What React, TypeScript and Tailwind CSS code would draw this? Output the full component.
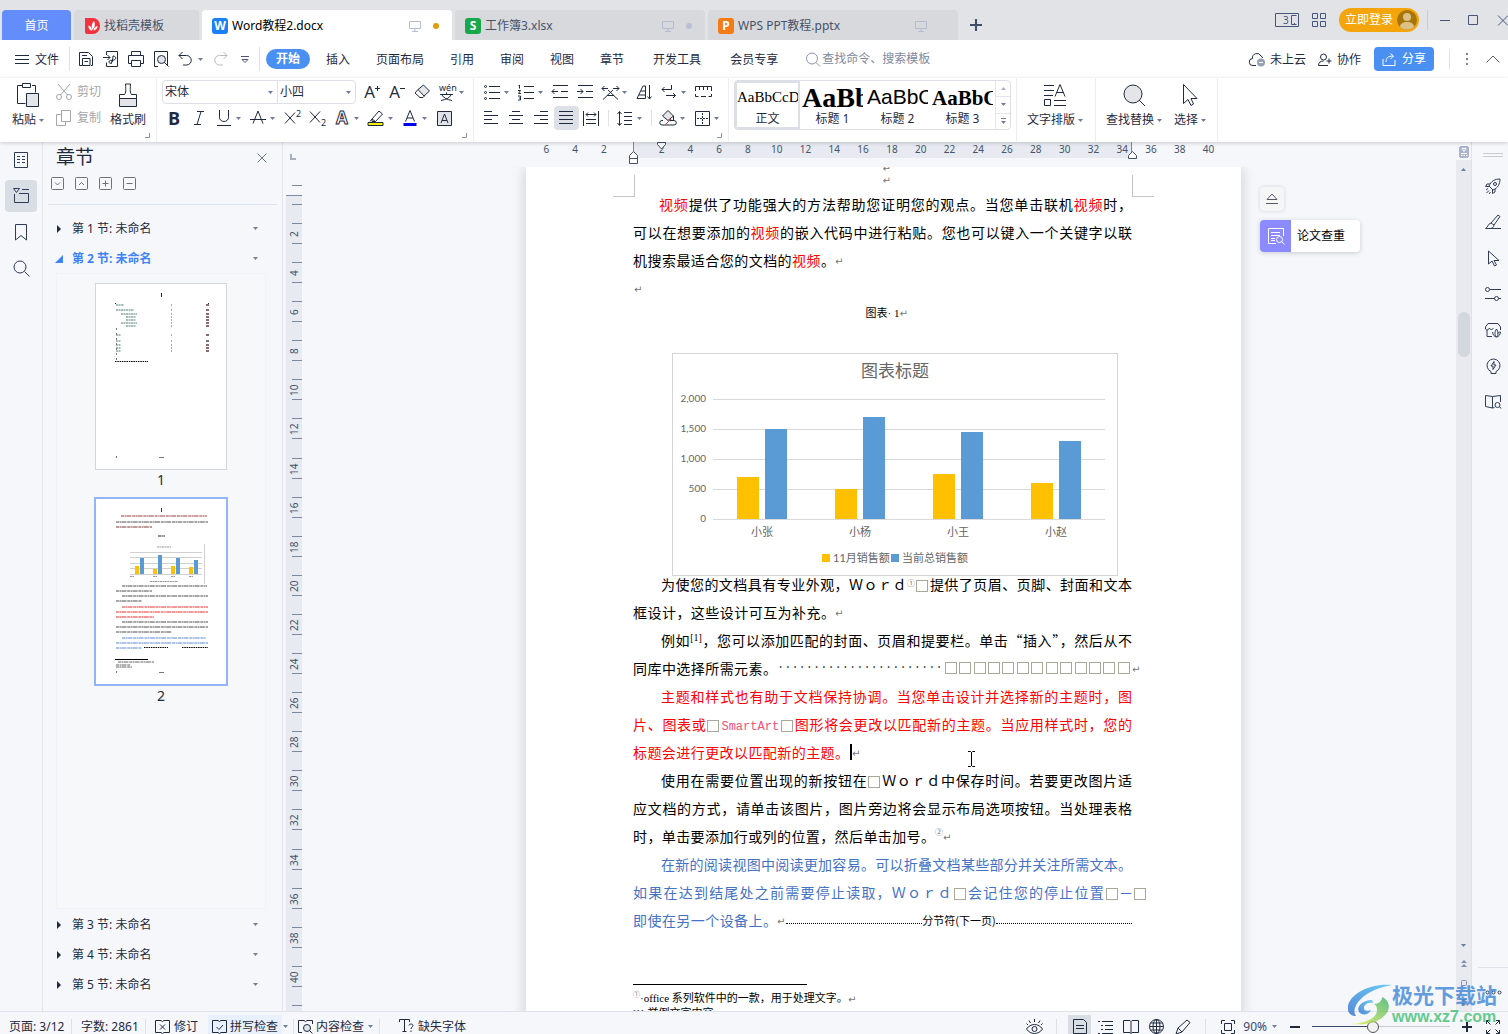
import { ReactNode } from "react";
import clsx from "clsx";

interface SvgProps {
  w?: number;
  h?: number;
  className?: string;
  children: ReactNode;
}

const Svg = ({ w = 18, h = 18, className, children }: SvgProps) => (
  <svg
    width={w}
    height={h}
    viewBox={`0 0 ${w} ${h}`}
    fill="none"
    stroke="currentColor"
    strokeWidth="1"
    className={clsx("shrink-0 overflow-visible", className)}
    aria-hidden="true"
  >
    {children}
  </svg>
);

const Caret = ({ className }: { className?: string }) => (
  <svg width="5" height="3" viewBox="0 0 5 3" className={clsx("shrink-0 fill-[#6f7d98]", className)} aria-hidden="true">
    <path d="M0 0h5L2.5 3z" />
  </svg>
);

const Screen = () => (
  <Svg w={12} h={12} className="text-[#b4bcd2]">
    <path d="M.5 1.5h11v7H.5zM6 8.5v3M3 11.5h6" />
  </Svg>
);

/* ---------- tab strip ---------- */

interface FileTabProps {
  name: string;
  letter: string;
  logo: string;
  active?: boolean;
  dot?: string;
}

const FileTab = ({ name, letter, logo, active, dot }: FileTabProps) => (
  <button
    className={clsx(
      "flex h-[30px] w-[250px] items-center rounded-t pl-[10px] pt-px text-left",
      active ? "bg-white text-black" : "bg-[#d8d9dc] text-[#46526b]",
    )}
  >
    <span className={clsx("flex size-4 items-center justify-center rounded-[3px] text-xs font-bold text-white", logo)}>
      {letter}
    </span>
    <span className="ml-1 flex-1">{name}</span>
    <Screen />
    <span className={clsx("ml-3 mr-[13px] size-[6px] rounded-full", dot)} />
  </button>
);

const TabStrip = () => (
  <header className="flex h-10 shrink-0 items-end bg-[#e2e3e7]">
    <div className="flex gap-[3px] pl-[2px]">
      <button className="h-[30px] w-[69px] rounded-t bg-[#638dfa] pt-px text-white">首页</button>
      <button className="flex h-[30px] w-[125px] items-center rounded-t bg-[#d8d9dc] pl-[11px] pt-px text-[#46526b]">
        <Svg w={15} h={16} className="mr-1">
          <path d="M0 0h8a7 8 0 0 1 0 16H2a2 2 0 0 1-2-2z" fill="#f5333f" stroke="none" />
          <path d="M7 13C4.500 12 3 10 3.500 7.500 5.500 8 7 9.500 7 13zM7.500 12C6 8 7 5 9 3c1.500 3 1 6-1.500 9zM8.500 12.500c.5-2.500 1.500-4 4-4.500 0 2.500-1.500 4-4 4.500z" fill="#fff" stroke="none" />
        </Svg>
        找稻壳模板
      </button>
      <FileTab name="Word教程2.docx" letter="W" logo="bg-[#1b7ff5]" active dot="bg-[#e39a0b]" />
      <FileTab name="工作簿3.xlsx" letter="S" logo="bg-[#17a84b]" dot="bg-[#b9c0d6]" />
      <FileTab name="WPS PPT教程.pptx" letter="P" logo="bg-[#f57c14]" />
    </div>
    <button aria-label="新建标签" className="mb-2 ml-3 text-[#3f4d69]">
      <Svg w={12} h={14}>
        <path d="M6 1v12M0 7h12" strokeWidth="2" />
      </Svg>
    </button>
    <div className="ml-auto flex h-10 items-center overflow-hidden text-[#46567a]">
      <Svg w={24} h={14}>
        <path d="M.5.5h23v13H.5zM21.500 2.500h-5v9h5M19 10.500h1" />
        <text x="8" y="11" fontSize="10" fill="currentColor" stroke="none">3</text>
      </Svg>
      <Svg w={14} h={14} className="ml-[13px]">
        <path d="M.5.5h5v5h-5zM8.500.5h5v5h-5zM.5 8.500h5v5h-5zM8.500 8.500h5v5h-5z" />
      </Svg>
      <button className="ml-[13px] flex h-6 w-20 items-center justify-between rounded-full bg-[#f5a50c] pl-[6px] pr-[2px] text-white">
        立即登录
        <Svg w={20} h={20}>
          <circle cx="10" cy="10" r="10" fill="#a87508" stroke="none" />
          <circle cx="10" cy="7" r="4" fill="#dcc187" stroke="none" />
          <path d="M3 17c0-3.500 3-5 7-5s7 1.500 7 5a10 10 0 0 1-14 0z" fill="#dcc187" stroke="none" />
        </Svg>
      </button>
      <span className="ml-2 h-5 w-px bg-[#cbccd1]" />
      <button aria-label="最小化" className="ml-3">
        <Svg w={10} h={10}><path d="M0 5.500h10" /></Svg>
      </button>
      <button aria-label="最大化" className="ml-[18px]">
        <Svg w={10} h={10}><path d="M.5.5h9v9h-9z" /></Svg>
      </button>
      <button aria-label="关闭" className="-mr-px ml-[19px]">
        <Svg w={12} h={11}><path d="M1 .5l10 10M11 .5l-10 10" /></Svg>
      </button>
    </div>
  </header>
);

/* ---------- menu row ---------- */

const Divider = ({ className }: { className?: string }) => (
  <span className={clsx("w-px shrink-0 bg-[#dfe1e6]", className)} />
);

const MenuRow = () => (
  <nav className="flex h-[38px] shrink-0 items-center bg-white pl-[15px] text-[#1f2a3f]">
    <button className="flex items-center gap-[6px] pt-px">
      <Svg w={14} h={12}><path d="M0 1.500h14M0 5.500h14M0 9.500h14" /></Svg>
      文件
    </button>
    <Divider className="ml-[10px] h-6" />
    <div className="flex w-[189px] items-center pl-2">
      <button aria-label="保存" className="w-[25px]">
        <Svg w={16} h={16}>
          <path d="M4.500 14.500h-3v-13h9l4 4v9h-1.500M4.500 14.500v-7h7.500v7zM4 4.500h5M6.500 10.500h3.500" />
        </Svg>
      </button>
      <button aria-label="输出为PDF" className="w-[25px]">
        <Svg w={16} h={16}>
          <path d="M3.500 4V.5h11v15h-11v-4M0 6.500h7M4.500 4L7 6.500 4.500 9M8 13c1-3 2-5 2-8 3 0 4 3 1 4-3 .5-5 0-5 2s3 2 4-2" />
        </Svg>
      </button>
      <button aria-label="打印" className="w-[25px]">
        <Svg w={16} h={16}>
          <path d="M3.500 4.500v-4h9v4M3.500 12.500h-3v-8h15v8h-3M3.500 9.500h9v6h-9z" />
        </Svg>
      </button>
      <button aria-label="打印预览" className="w-[25px]">
        <Svg w={16} h={16}>
          <path d="M5 15.500H1.500V.5h13V15" />
          <circle cx="8.500" cy="8.500" r="4" fill="#dfe3ea" />
          <path d="M11.500 11.500l4 4" />
        </Svg>
      </button>
      <button aria-label="撤销" className="flex w-9 items-center gap-[6px]">
        <Svg w={14} h={16}>
          <path d="M4.500 1L1 4.500 4.500 8M1 4.500h7.500a4.500 4.500 0 0 1 0 9.500H5" />
        </Svg>
        <Caret />
      </button>
      <button aria-label="恢复" className="w-[27px] text-[#b5bac4]">
        <Svg w={14} h={16}>
          <path d="M9.500 1L13 4.500 9.500 8M13 4.500H5.500a4.500 4.500 0 0 0 0 9.500H9" />
        </Svg>
      </button>
      <button aria-label="自定义快速访问" className="text-[#4a5570]">
        <Svg w={8} h={8}><path d="M0 1.500h8M1 4.500l3 3 3-3z" /></Svg>
      </button>
    </div>
    <Divider className="h-6" />
    <div className="flex items-center">
      <button className="ml-[6px] mr-[3px] h-5 w-11 rounded-full bg-[#4a90f2] font-bold text-white">开始</button>
      {["插入", "页面布局", "引用", "审阅", "视图", "章节"].map((m) => (
        <button key={m} className="px-[13px] pt-px">{m}</button>
      ))}
      <button className="pl-4 pt-px">开发工具</button>
      <button className="pl-[29px] pt-px">会员专享</button>
    </div>
    <label className="ml-7 flex items-center gap-[2px]">
      <Svg w={14} h={15} className="text-[#8a94aa]">
        <circle cx="6" cy="6.500" r="5.500" />
        <path d="M10 10.500l4 4" />
      </Svg>
      <input
        aria-label="查找命令"
        placeholder="查找命令、搜索模板"
        className="w-[120px] outline-none placeholder:text-[#8089a0]"
      />
    </label>
    <div className="ml-auto flex items-center pr-2">
      <button className="flex items-center gap-1 pt-px">
        <Svg w={17} h={14}>
          <path d="M7 12.500H4a3.500 3.500 0 0 1-.5-7 4.500 4.500 0 0 1 8.500-2.500c1 .5 1.500 1 1.500 2" />
          <circle cx="12" cy="9.500" r="4" fill="#98a0b3" stroke="none" />
          <path d="M10 9.500h4" stroke="#fff" />
        </Svg>
        未上云
      </button>
      <button className="ml-3 flex items-center gap-[5px] pt-px">
        <Svg w={14} h={14}>
          <circle cx="5.500" cy="4" r="3" />
          <path d="M10 12.500H.5c0-3 2-4.500 5-4.500M11 5.500v5M8.500 8h5" />
        </Svg>
        协作
      </button>
      <button className="ml-[13px] flex h-6 w-[60px] items-center justify-center gap-[6px] rounded bg-[#4a90f2] text-white">
        <Svg w={14} h={13}>
          <path d="M1 6v6.500h12V7M4 9c0-4 2-6 7-6M8.500.5L11.500 3 8.500 6" />
        </Svg>
        分享
      </button>
      <Divider className="ml-[15px] h-5" />
      <button aria-label="更多" className="ml-4 text-[#7a8296]">
        <Svg w={3} h={13}><path d="M1 0v2M1 5v2M1 10v2" strokeWidth="2" /></Svg>
      </button>
      <button aria-label="收起功能区" className="ml-[17px] text-[#5a6478]">
        <Svg w={14} h={8}><path d="M.5 7.500L7 1l6.500 6.500" /></Svg>
      </button>
    </div>
  </nav>
);

/* ---------- ribbon ---------- */

const Group = ({ className, launcher, children }: { className?: string; launcher?: boolean; children: ReactNode }) => (
  <div className={clsx("relative flex h-16 shrink-0 border-r border-[#eceef1] pt-[2px]", className)}>
    {children}
    {launcher && (
      <Svg w={5} h={5} className="absolute bottom-1 right-[6px] text-[#8a93a8]">
        <path d="M4.500 0v4.500H0" />
      </Svg>
    )}
  </div>
);

interface ToolProps {
  label: string;
  drop?: boolean;
  on?: boolean;
  children: ReactNode;
}

const Tool = ({ label, drop, on, children }: ToolProps) => (
  <button
    aria-label={label}
    className={clsx("flex h-6 items-center rounded-sm", drop ? "w-[34px]" : "w-[25px]", on && "bg-[#dde1e7]")}
  >
    <span className="flex w-6 items-center justify-center">{children}</span>
    {drop && <Caret />}
  </button>
);

const BigTool = ({ label, drop, className, children }: { label: string; drop?: boolean; className?: string; children: ReactNode }) => (
  <button className={clsx("flex h-[50px] flex-col items-center", className)}>
    <span className="flex h-[30px] items-center">{children}</span>
    <span className="flex h-5 items-center gap-[3px] whitespace-nowrap">
      {label}
      {drop && <Caret />}
    </span>
  </button>
);

const Letter = ({ children, className = "text-[17px]" }: { children: ReactNode; className?: string }) => (
  <span className={clsx("font-['Open_Sans',sans-serif] leading-6", className)}>{children}</span>
);

const Dropdown = ({ label, value, className }: { label: string; value: string; className?: string }) => (
  <span className={clsx("relative flex h-6 items-center border border-[#dcdfe5]", className)}>
    <select aria-label={label} className="h-full w-full appearance-none pl-[2px] outline-none">
      <option>{value}</option>
    </select>
    <Caret className="pointer-events-none absolute right-1" />
  </span>
);

const StyleCell = ({ sample, name, className, on }: { sample: string; name: string; className: string; on?: boolean }) => (
  <button className={clsx("flex w-[65px] flex-col overflow-hidden border-2", on ? "border-[#dcdfe6]" : "border-transparent")}>
    <span className={clsx("h-[27px] w-full shrink-0 overflow-hidden whitespace-nowrap text-left text-black", className)}>
      {sample}
    </span>
    <span className="w-full shrink-0 text-center leading-[17px]">{name}</span>
  </button>
);

const Ribbon = () => (
  <section className="z-10 flex h-16 shrink-0 bg-white text-[#1f2a3f] shadow-[0_1px_4px_rgba(0,0,0,0.18)]">
    <Group className="w-[157px] pl-3" launcher>
      <BigTool label="粘贴" drop className="w-8">
        <Svg w={22} h={24}>
          <path d="M6 2.500H.5v18h8M15 2.500h3.500v7M5.500.5h8v4h-8z" />
          <path d="M9.500 10.500h12v13h-12z" fill="#e3e5e9" />
        </Svg>
      </BigTool>
      <div className="ml-3 flex flex-col gap-[2px] text-[#a5a7ab]">
        <button className="flex h-6 items-center gap-[5px]">
          <Svg w={16} h={16}>
            <path d="M2 0l9.500 11M14 0L4.500 11" />
            <circle cx="3" cy="13" r="2.500" />
            <circle cx="13" cy="13" r="2.500" />
          </Svg>
          剪切
        </button>
        <button className="flex h-6 items-center gap-[5px]">
          <Svg w={16} h={16}>
            <path d="M5.500.5h9v11h-9zM5.500 4.500h-5v11h9v-4" />
          </Svg>
          复制
        </button>
      </div>
      <BigTool label="格式刷" className="ml-[9px] w-9">
        <Svg w={18} h={24}>
          <path d="M.5 15.500h17v8H.5z" fill="#e3e5e9" />
          <path d="M.5 15.500v-4h5c1.500-2 1.500-4 1-10.500h5c-.5 6.500-.5 8.500 1 10.500h5v4" />
        </Svg>
      </BigTool>
    </Group>

    <Group className="w-[317px] pl-[5px]" launcher>
      <div className="flex flex-col gap-[2px]">
        <div className="flex">
          <Dropdown label="字体" value="宋体" className="w-[116px] rounded-l-sm" />
          <Dropdown label="字号" value="小四" className="-ml-px mr-[4px] w-[79px] rounded-r-sm" />
          <Tool label="增大字号">
            <Letter>A</Letter>
            <Svg w={5} h={5} className="mb-2"><path d="M2.500 0v5M0 2.500h5" /></Svg>
          </Tool>
          <Tool label="减小字号">
            <Letter>A</Letter>
            <Svg w={5} h={5} className="mb-2"><path d="M0 2.500h5" /></Svg>
          </Tool>
          <Tool label="清除格式">
            <Svg w={16} h={16}>
              <path d="M4 5.500L9.500 1l6 6-5.500 5z" fill="#e3e5e9" />
              <path d="M4 5.500L1 9l5 4.500h3l1.500-1.500" />
            </Svg>
          </Tool>
          <Tool label="拼音指南" drop>
            <Svg w={18} h={18}>
              <text x="1" y="8" fontSize="9" fill="currentColor" stroke="none">wén</text>
              <path d="M2 11.500h13M8.500 9.500v2M4 12c1.500 3 5 4.500 10 5.500M13 12c-1.500 3-5 4.500-10 5.500" />
            </Svg>
          </Tool>
        </div>
        <div className="flex">
          <Tool label="加粗"><Letter className="text-lg font-bold">B</Letter></Tool>
          <Tool label="倾斜">
            <Svg w={12} h={14}><path d="M4 .5h7M1 13.500h7M8 .5l-4 13" /></Svg>
          </Tool>
          <Tool label="下划线" drop>
            <Svg w={14} h={16}><path d="M2.500 0v7.500a4.500 4 0 0 0 9 0V0M0 15.500h14" /></Svg>
          </Tool>
          <Tool label="删除线" drop>
            <Svg w={16} h={16}>
              <path d="M3 13.500L8 1l5 12.500M0 9.500h16" />
            </Svg>
          </Tool>
          <Tool label="上标">
            <Svg w={17} h={16}>
              <path d="M1 2.500l10 11M11 2.500L1 13.500" />
              <text x="12" y="7" fontSize="9" fill="currentColor" stroke="none">2</text>
            </Svg>
          </Tool>
          <Tool label="下标">
            <Svg w={17} h={16}>
              <path d="M1 1.500l10 11M11 1.500L1 12.500" />
              <text x="12" y="16" fontSize="9" fill="currentColor" stroke="none">2</text>
            </Svg>
          </Tool>
          <Tool label="文字效果" drop>
            <Svg w={16} h={16}>
              <text x="2" y="14" fontSize="17" strokeWidth="1" fontWeight="bold">A</text>
            </Svg>
          </Tool>
          <Tool label="突出显示" drop>
            <Svg w={16} h={16}>
              <path d="M4 9l7-8 3.500 3-7 7.500H4zM4 9l3.500 2.500M4 9l-2 2.500" />
              <path d="M0 12.500h15v3H0z" fill="#f7f300" />
            </Svg>
          </Tool>
          <Tool label="字体颜色" drop>
            <Svg w={14} h={16}>
              <path d="M2.500 11.500L7 .5l4.500 11M4 8h6" />
              <path d="M.5 13h13v3H.5z" fill="#0000f0" stroke="none" />
            </Svg>
          </Tool>
          <Tool label="字符底纹">
            <Svg w={15} h={15}>
              <path d="M.5.5h14v14H.5z" fill="#dfe2e7" />
              <path d="M4 12l3.500-9 3.500 9M5 9.500h5" />
            </Svg>
          </Tool>
        </div>
      </div>
    </Group>

    <Group className="w-[255px] pl-[5px]" launcher>
      <div className="flex flex-col gap-[2px]">
        <div className="flex pl-px">
          <Tool label="项目符号" drop>
            <Svg w={16} h={15}>
              <path d="M5 1.500h11M5 7.500h11M5 13.500h11" />
              <circle cx="1.500" cy="1.500" r="1" /><circle cx="1.500" cy="7.500" r="1" /><circle cx="1.500" cy="13.500" r="1" />
            </Svg>
          </Tool>
          <Tool label="编号" drop>
            <Svg w={16} h={15}>
              <path d="M6 1.500h10M6 7.500h10M6 13.500h10M1.500 0v3.500M.5.5h1M0 5.500h2.500L.5 8.500H3M0 11h2.500v4H0M1 13h1.500" />
            </Svg>
          </Tool>
          <Tool label="减少缩进">
            <Svg w={16} h={14}><path d="M1 .5h15M9 6.500h7M1 12.500h15M0 6.500h6M2.500 4L0 6.500 2.500 9" /></Svg>
          </Tool>
          <Tool label="增加缩进">
            <Svg w={16} h={14}><path d="M1 .5h15M9 6.500h7M1 12.500h15M0 6.500h6M3.500 4L6 6.500 3.500 9" /></Svg>
          </Tool>
          <Tool label="中文版式" drop>
            <Svg w={17} h={15}>
              <path d="M0 3.500h6M2.500 1L0 3.500 2.500 6M17 3.500h-6M14.500 1L17 3.500 14.500 6M1 14.500L11 5M6 5l10 9.500M5 10.500h7" />
            </Svg>
          </Tool>
          <Tool label="排序">
            <Svg w={16} h={16}><path d="M1 14.500L7 2h2.500v12.500zM3 11h6M5 7h4M13.500 1v14M11.500 12.500l2 2.500 2-2.500" /></Svg>
          </Tool>
          <Tool label="显示标记" drop>
            <Svg w={16} h={16}><path d="M10.500 1v4.500H1M3.500 3L1 5.500 3.500 8M5 11.500h9.500M12 9l2.500 2.500L12 14" /></Svg>
          </Tool>
          <Tool label="制表位">
            <Svg w={17} h={12}><path d="M.5 5V.5h16V5M4.500 1v3M8.500 1v3M12.500 1v3M.5 8v2.500h3M16.500 8v2.500h-3M6 10.500h5" /></Svg>
          </Tool>
        </div>
        <div className="flex">
          <Tool label="左对齐"><Svg w={14} h={14}><path d="M0 .5h8M0 4.500h14M0 8.500h8M0 12.500h14" /></Svg></Tool>
          <Tool label="居中"><Svg w={14} h={14}><path d="M3 .5h8M0 4.500h14M3 8.500h8M0 12.500h14" /></Svg></Tool>
          <Tool label="右对齐"><Svg w={14} h={14}><path d="M6 .5h8M0 4.500h14M6 8.500h8M0 12.500h14" /></Svg></Tool>
          <Tool label="两端对齐" on><Svg w={14} h={14}><path d="M0 .5h14M0 4.500h14M0 8.500h14M0 12.500h14" /></Svg></Tool>
          <Tool label="分散对齐">
            <Svg w={16} h={15}><path d="M.5 0v15M15.500 0v15M3 3.500h10M5 1.500l-2 2 2 2M11 1.500l2 2-2 2M3 8.500h10M3 12.500h10" /></Svg>
          </Tool>
          <Divider className="mx-1 my-1" />
          <Tool label="行距" drop>
            <Svg w={16} h={15}><path d="M7 1.500h8M7 5.500h8M7 9.500h8M7 13.500h8M2.500 1v13M.5 3l2-2.500 2 2.500M.5 12l2 2.500 2-2.500" /></Svg>
          </Tool>
          <Divider className="mx-1 my-1" />
          <Tool label="底纹颜色" drop>
            <Svg w={16} h={16}>
              <path d="M2.500 6L8 .5 13.500 6 8 10.500z" fill="#e3e5e9" />
              <path d="M13.500 6v4M3 10.500H2a2 2 0 0 0 0 4.500h12a2 2 0 0 0 0-4.500h-4" />
              <path d="M5 15l6-6" stroke="#e0403a" />
            </Svg>
          </Tool>
          <Tool label="边框" drop>
            <Svg w={15} h={15}><path d="M.5.5h14v14H.5z" /><path d="M7.500 2v11M2 7.500h11" strokeDasharray="2 1" /></Svg>
          </Tool>
        </div>
      </div>
    </Group>

    <Group className="w-72 pl-[5px]">
      <div className="flex h-[50px] w-[277px] rounded-sm border border-[#dcdfe5]">
        <StyleCell sample="AaBbCcD" name="正文" on className="font-['Liberation_Serif',serif] text-[15px] leading-[29px]" />
        <StyleCell sample="AaBb" name="标题 1" className="font-['Liberation_Serif',serif] text-[28px] font-bold leading-[30px]" />
        <StyleCell sample="AaBbC" name="标题 2" className="font-['Liberation_Sans',sans-serif] text-[21px] leading-[27px]" />
        <StyleCell sample="AaBbC" name="标题 3" className="font-['Liberation_Serif',serif] text-[21px] font-bold leading-[30px]" />
        <div className="flex flex-1 flex-col divide-y divide-[#e4e6eb] border-l border-[#e4e6eb]">
          <button aria-label="上一行" className="flex flex-1 items-center justify-center"><Caret className="rotate-180 opacity-60" /></button>
          <button aria-label="下一行" className="flex flex-1 items-center justify-center"><Caret /></button>
          <button aria-label="更多样式" className="flex flex-1 flex-col items-center justify-center gap-[2px]">
            <span className="h-px w-[5px] bg-[#6f7d98]" />
            <Caret />
          </button>
        </div>
      </div>
    </Group>

    <Group className="w-[79px] pl-[10px]">
      <BigTool label="文字排版" drop>
        <Svg w={24} h={24}>
          <path d="M1 2.500h10M1 7.500h10M1 12.500h9M1.500 16.500h6v6h-6zM11 17.500h12M11 22.500h12M12 13.500l5-12 5 12M13.500 9.500h7" />
        </Svg>
      </BigTool>
    </Group>

    <Group className="w-[122px] gap-3 pl-[10px]">
      <BigTool label="查找替换" drop>
        <Svg w={24} h={24}>
          <circle cx="11" cy="11" r="9" fill="#e3e5e9" />
          <path d="M17 17l6 6" />
        </Svg>
      </BigTool>
      <BigTool label="选择" drop>
        <Svg w={16} h={24}>
          <path d="M1.500 1.500v19l4.500-4 3 6 2.500-1.500-2.500-5.500h6z" />
        </Svg>
      </BigTool>
    </Group>
  </section>
);

/* ---------- left side ---------- */

const LeftRail = () => (
  <aside className="flex w-[43px] shrink-0 flex-col items-center gap-1 border-r border-[#e1e4e9] pt-[2px] text-[#2f3c56]">
    <button aria-label="目录" className="flex size-8 items-center justify-center">
      <Svg w={14} h={16}><path d="M.5.5h13v15H.5zM3 4.500h3M8 4.500h3M3 7.500h3M8 7.500h3M3 10.500h3M8 10.500h3" /></Svg>
    </button>
    <button aria-label="章节导航" className="flex size-8 items-center justify-center rounded-sm bg-[#d9dee5]">
      <Svg w={16} h={16}><path d="M.5.5h6l-3 4zM9 1.500h7M1.500 6v8.500h14v-9H6" /></Svg>
    </button>
    <button aria-label="书签" className="flex size-8 items-center justify-center">
      <Svg w={12} h={17}><path d="M.5.5h11v15.500L6 11.500.5 16z" /></Svg>
    </button>
    <button aria-label="查找" className="flex size-8 items-center justify-center">
      <Svg w={17} h={17}><circle cx="7" cy="7" r="6" /><path d="M11.500 11.500l5 5" /></Svg>
    </button>
  </aside>
);

const SectionRow = ({ name, open }: { name: string; open?: boolean }) => (
  <button className={clsx("flex h-[30px] w-full items-center pl-3 pr-6 pt-px", open ? "font-bold text-[#3f83f8]" : "text-[#1f2a3f]")}>
    <Svg w={8} h={8} className="mr-[9px]">
      {open ? <path d="M8 0v8H0z" fill="currentColor" stroke="none" /> : <path d="M2 0l4 4-4 4z" fill="currentColor" stroke="none" />}
    </Svg>
    <span>{name}</span>
    <Caret className="ml-auto" />
  </button>
);

const tocRows = [
  [21, 20, 8],
  [26, 20, 18],
  [30, 25, 16],
  [33, 30, 10],
  [36, 30, 10],
  [39, 25, 16],
  [42, 30, 10],
  [51, 20, 5],
  [57, 20, 5],
  [61, 20, 5],
  [64, 20, 5],
  [67, 20, 5],
];

const ThumbOne = () => (
  <Svg w={130} h={185}>
    <path d="M65.500 9v4M19.500 19v1M112.500 19v1" stroke="#222" />
    {tocRows.map(([y, x, w]) => (
      <g key={y}>
        <path d={`M${x} ${y}h${w}`} stroke="#7fa39a" strokeWidth="2" strokeDasharray="2 .5" opacity=".7" />
        <path d={`M75 ${y}h1`} stroke="#555" />
        <path d={`M110 ${y}h3`} stroke="#8a6a6a" strokeWidth="2" />
      </g>
    ))}
    <path d="M20.500 44v32" stroke="#777" strokeDasharray="2 3" />
    <path d="M19 77.500h33" stroke="#000" strokeDasharray="1.500 .8" />
    <path d="M20.500 172v2M63 173.500h5" stroke="#777" />
  </Svg>
);

const thumbLines: [number, number, number, string][] = [
  [17, 25, 86, "#b06a6a"],
  [23, 20, 92, "#777777"],
  [28, 20, 36, "#996666"],
  [37, 62, 7, "#555555"],
  [87, 26, 85, "#777777"],
  [92, 20, 36, "#777777"],
  [97, 26, 86, "#777777"],
  [102, 20, 26, "#777777"],
  [108, 26, 86, "#f06060"],
  [113, 20, 92, "#f06060"],
  [118, 20, 38, "#f06060"],
  [123, 26, 86, "#777777"],
  [128, 20, 92, "#777777"],
  [133, 20, 56, "#777777"],
  [139, 26, 84, "#7ea4dc"],
  [144, 20, 92, "#7ea4dc"],
  [149, 20, 26, "#7ea4dc"],
  [163, 22, 36, "#888888"],
  [166, 20, 14, "#888888"],
  [168, 20, 16, "#888888"],
];

const ThumbTwo = () => (
  <Svg w={130} h={185}>
    <path d="M65.500 9v4" stroke="#333" />
    {thumbLines.map(([y, x, w, color]) => (
      <path key={y} d={`M${x} ${y}h${w}`} stroke={color} strokeWidth="2" strokeDasharray="3 .5 1.500 .4 5 .8" opacity=".65" />
    ))}
    <path d="M34 53.500h72M34 58.500h72M34 64.500h72M34 69.500h72M34 75.500h72M108.500 45v40" stroke="#d0d0d0" />
    <path d="M61 48h14M34 77.500h4M57 77.500h4M75 77.500h4M93 77.500h4M54 82.500h28" stroke="#999" strokeDasharray="2 .5" />
    <path d="M39 67h4v8h-4zM57 70h4v5h-4zM75 67h4v8h-4zM93 68h4v7h-4z" fill="#ffc000" stroke="none" />
    <path d="M44 59h4v16h-4zM62 56h4v19h-4zM80 59h4v16h-4zM98 61h4v14h-4z" fill="#5b9bd5" stroke="none" />
    <path d="M48 148.500h24M86 148.500h26" stroke="#000" strokeDasharray="1.500 .8" />
    <path d="M19 160.500h33" stroke="#000" />
    <path d="M20.500 172v2M63 173.500h5" stroke="#777" />
  </Svg>
);

const SectionPanel = () => (
  <aside className="flex w-60 shrink-0 flex-col border-r border-[#e1e4e9] text-[#1f2a3f]">
    <div className="flex h-[30px] items-center justify-between pl-[13px] pr-[15px] pt-px">
      <h2 className="text-[19px]">章节</h2>
      <button aria-label="关闭面板" className="text-[#6b7893]">
        <Svg w={10} h={10}><path d="M.5.5l9 9M9.500.5l-9 9" /></Svg>
      </button>
    </div>
    <div className="mx-[5px] flex h-[33px] gap-[11px] border-b border-[#dfe3ea] pl-[3px] pt-[5px] text-[#6e7278]">
      {["M4 5.500l2.500 2.500L9 5.500", "M4 8l2.500-2.500L9 8", "M3.500 6.500h6M6.500 3.500v6", "M3.500 6.500h6"].map((d, i) => (
        <button key={d} aria-label={["展开", "折叠", "添加", "删除"][i]} className="h-[13px]">
          <Svg w={13} h={13}>
            <rect x=".5" y=".5" width="12" height="12" rx="1" />
            <path d={d} />
          </Svg>
        </button>
      ))}
    </div>
    <div className="flex min-h-0 flex-1 flex-col pb-3 pt-2">
      <SectionRow name="第 1 节: 未命名" />
      <SectionRow name="第 2 节: 未命名" open />
      <div className="ml-[13px] mr-[16px] flex min-h-0 flex-1 flex-col items-center border border-[#f1f3f5] bg-[#f7f8fa] pt-[9px]">
        <button aria-label="第 1 页" className="border border-[#d3d5d9] bg-white"><ThumbOne /></button>
        <span className="h-[27px] text-sm">1</span>
        <button aria-label="第 2 页" className="border-2 border-[#92b4f8] bg-white"><ThumbTwo /></button>
        <span className="text-sm">2</span>
      </div>
      <SectionRow name="第 3 节: 未命名" />
      <SectionRow name="第 4 节: 未命名" />
      <SectionRow name="第 5 节: 未命名" />
    </div>
  </aside>
);

/* ---------- rulers ---------- */

const verticalMarks = Array.from({ length: 20 }, (_, i) => (i + 1) * 2);
const horizontalMarks = ["6", "4", "2", "", ...Array.from({ length: 20 }, (_, i) => String((i + 1) * 2))];

const VerticalRuler = () => (
  <div className="flex w-5 shrink-0 flex-col overflow-hidden pl-[3px] pr-px text-[#46526b]">
    <div className="flex h-[53px] shrink-0 flex-col items-end justify-between">
      <Svg w={6} h={6} className="mr-[6px] mt-3 text-[#a9b0c0]"><path d="M1 0v5h5" strokeWidth="2" /></Svg>
      <span className="mb-[9px] h-px w-[10px] bg-[#7c89a3]" />
    </div>
    <div className="shrink-0 border-t border-[#7c89a3] bg-[#e7ebf1]">
      <div className="flex h-[27px] justify-end pt-2"><span className="h-px w-[10px] bg-[#7c89a3]" /></div>
      <div className="grid h-[782px] grid-cols-1 auto-rows-fr">
        {verticalMarks.map((n) => (
          <div key={n} className="flex flex-col items-end">
            <span className="h-px w-[10px] bg-[#7c89a3]" />
            <span className="mr-[2px] flex h-[19px] rotate-180 items-center justify-center pb-px text-[10px] leading-3 [writing-mode:vertical-rl]">
              {n}
            </span>
            <span className="h-px w-[10px] bg-[#7c89a3]" />
          </div>
        ))}
      </div>
      <div className="flex h-3 justify-end"><span className="h-px w-[10px] bg-[#7c89a3]" /></div>
    </div>
  </div>
);

const HorizontalRuler = () => (
  <div className="relative h-[25px] w-[715px] shrink-0 pl-[6px] text-[#46526b]">
    <div className="absolute left-[107px] top-0 h-4 w-[499px] border-x border-[#7c89a3] bg-[#e7ebf1]" />
    <div className="relative grid w-[691px] grid-cols-[repeat(24,minmax(0,1fr))] text-center text-[10px] leading-[15px]">
      {horizontalMarks.map((n, i) => (
        <span key={i}>{n}</span>
      ))}
    </div>
    <Svg w={9} h={13} className="absolute left-[103px] top-[9px]">
      <path d="M.5 4.500L4.500.5l4 4v3h-8zM.5 7.500h8v5h-8z" fill="#fff" />
    </Svg>
    <Svg w={9} h={8} className="absolute left-[131px] top-0"><path d="M.5.500h8v2l-4 4.500-4-4.500z" fill="#fff" /></Svg>
    <Svg w={9} h={8} className="absolute left-[602px] top-[9px]"><path d="M.5 7.500v-3l4-4 4 4v3z" fill="#fff" /></Svg>
  </div>
);

/* ---------- document ---------- */

const Return = ({ className = "pt-1" }: { className?: string }) => (
  <span className={clsx("inline-block w-0 font-['DejaVu_Sans',sans-serif] text-[10px] text-[#777]", className)}>↵</span>
);

const Box = () => <span className="mx-px inline-block size-3 border border-[#a9a998] align-[-2px]" />;

const Line = ({ children, className = "w-full" }: { children: ReactNode; className?: string }) => (
  <span className={clsx("block h-7 whitespace-nowrap [text-align-last:justify]", className)}>{children}</span>
);

const Tail = ({ width, text, children }: { width: string; text: string; children: ReactNode }) => (
  <span className="flex h-7 items-center">
    <Line className={width}>{text}</Line>
    {children}
  </span>
);

const people = [
  { name: "小张", month: 700, total: 1500 },
  { name: "小杨", month: 500, total: 1700 },
  { name: "小王", month: 750, total: 1450 },
  { name: "小赵", month: 600, total: 1300 },
];

const SalesChart = () => (
  <svg width="446" height="223" viewBox="0 0 446 223" className="-mb-[6px] ml-[39px] mt-[29px] fill-[#666] font-['Lato','Noto_Sans_CJK_SC',sans-serif]">
    <rect x=".5" y=".5" width="445" height="222" fill="#fff" stroke="#d5d5d5" />
    <text x="223" y="24" textAnchor="middle" fontSize="17">图表标题</text>
    {["2,000", "1,500", "1,000", "500", "0"].map((t, i) => (
      <g key={t}>
        <path d={`M41 ${46.5 + i * 30}h392`} stroke="#d9d9d9" />
        <text x="34" y={49 + i * 30} textAnchor="end" fontSize="10">{t}</text>
      </g>
    ))}
    {people.map((p, i) => (
      <g key={p.name}>
        <rect x={65 + i * 98} y={166 - p.month * 0.06} width="22" height={p.month * 0.06} fill="#ffc000" />
        <rect x={93 + i * 98} y={166 - p.total * 0.06} width="22" height={p.total * 0.06} fill="#5b9bd5" />
        <text x={90 + i * 98} y="183" textAnchor="middle" fontSize="11">{p.name}</text>
      </g>
    ))}
    <rect x="150" y="201" width="8" height="8" fill="#ffc000" />
    <text x="161" y="209" fontSize="11">11月销售额</text>
    <rect x="219" y="201" width="8" height="8" fill="#5b9bd5" />
    <text x="230" y="209" fontSize="11">当前总销售额</text>
  </svg>
);

const Red = ({ children }: { children: ReactNode }) => <span className="text-[#f00]">{children}</span>;

const Page = () => (
  <article className="relative w-[715px] flex-1 bg-white pl-[107px] pr-[109px] font-['Noto_Sans_CJK_SC',sans-serif] text-sm leading-7 text-black shadow-[0_0_14px_rgba(0,0,0,0.18)] [clip-path:inset(0_-16px)]">
    <div className="-mt-[3px] flex h-[26px] flex-col items-center gap-[3px] leading-[9px]">
      <Return className="pt-0" />
      <Return className="pt-0" />
    </div>
    <span className="absolute left-[87px] top-2 h-[22px] w-[22px] border-b border-r border-[#c4c4c4]" />
    <span className="absolute left-[606px] top-2 h-[22px] w-[22px] border-b border-l border-[#c4c4c4]" />
    <p>
      <Line className="pl-[26px]">
        <Red>视频</Red>提供了功能强大的方法帮助您证明您的观点。当您单击联机<Red>视频</Red>时，
      </Line>
      <Line>
        可以在想要添加的<Red>视频</Red>的嵌入代码中进行粘贴。您也可以键入一个关键字以联
      </Line>
      <span className="flex h-7 items-center">
        <Line className="w-[202px]">机搜索最适合您的文档的<Red>视频</Red>。</Line>
        <Return />
      </span>
    </p>
    <p className="flex h-7 items-center pl-px"><Return /></p>
    <p className="text-center text-[11px] leading-5">
      图表<span className="font-['Liberation_Serif',serif]">· 1</span><Return className="pt-0" />
    </p>
    <SalesChart />
    <p className="relative">
      <Line className="pl-7">
        为使您的文档具有专业外观，Ｗｏｒｄ<sup className="text-[8px] text-[#777]">①</sup><Box />提供了页眉、页脚、封面和文本
      </Line>
      <Tail width="w-[202px]" text="框设计，这些设计可互为补充。"><Return /></Tail>
    </p>
    <p>
      <Line className="pl-7">
        例如<sup className="font-['Liberation_Serif',serif] text-[10px]">[1]</sup>，您可以添加匹配的封面、页眉和提要栏。单击“插入”，然后从不
      </Line>
      <span className="flex h-7 items-center">
        <Line className="w-[144px]">同库中选择所需元素。</Line>
        <span className="font-['Liberation_Mono',monospace] text-xs text-[#444]">{"·".repeat(23)}</span>
        <span className="flex flex-1 justify-between pl-[2px] pr-[2px]">
          {Array.from({ length: 13 }, (_, i) => (
            <span key={i} className="size-3 border border-[#a9a998]" />
          ))}
        </span>
        <Return />
      </span>
    </p>
    <p className="text-[#f00]">
      <Line className="pl-7">主题和样式也有助于文档保持协调。当您单击设计并选择新的主题时，图</Line>
      <Line>
        片、图表或<Box />
        <span className="mx-px font-['Liberation_Mono',monospace] text-xs text-[#f4507a]">SmartArt</span>
        <Box />图形将会更改以匹配新的主题。当应用样式时，您的
      </Line>
      <Tail width="w-[216px]" text="标题会进行更改以匹配新的主题。">
        <span className="ml-px h-4 w-[2px] bg-black" />
        <Return />
      </Tail>
    </p>
    <p>
      <Line className="pl-7">使用在需要位置出现的新按钮在<Box />Ｗｏｒｄ中保存时间。若要更改图片适</Line>
      <Line>应文档的方式，请单击该图片，图片旁边将会显示布局选项按钮。当处理表格</Line>
      <Tail width="w-[302px]" text="时，单击要添加行或列的位置，然后单击加号。">
        <sup className="text-[8px] text-[#777]">②</sup>
        <Return />
      </Tail>
    </p>
    <p className="text-[#4472c4]">
      <Line className="pl-7">在新的阅读视图中阅读更加容易。可以折叠文档某些部分并关注所需文本。</Line>
      <Line className="w-[514px]">
        如果在达到结尾处之前需要停止读取，Ｗｏｒｄ<Box />会记住您的停止位置<Box />－<Box />
      </Line>
      <Tail width="w-[144px]" text="即使在另一个设备上。">
        <Return />
        <span className="ml-[9px] mt-[6px] flex-1 border-b border-dotted border-black" />
        <span className="text-[11px] text-black">分节符(下一页)</span>
        <span className="mt-[6px] flex-1 border-b border-dotted border-black" />
      </Tail>
    </p>
    <div className="mt-[50px] w-[174px] border-t border-black" />
    <p className="flex h-[26px] items-center whitespace-nowrap font-['Liberation_Serif','Noto_Sans_CJK_SC',serif] text-[11px]">
      <sup className="text-[7px] text-[#777]">①</sup>
      <span>·office 系列软件中的一款，用于处理文字。</span>
      <Return />
    </p>
    <p className="-mt-[6px] flex items-center gap-1 whitespace-nowrap font-['Liberation_Serif','Noto_Sans_CJK_SC',serif] text-[11px] leading-4">
      <span className="text-[9px]">[1]</span>举例文字内容。
    </p>

    {/* mouse pointer over the text */}
    <Svg w={7} h={16} className="absolute left-[442px] top-[584px] text-black">
      <path d="M0 .5h2.500l1 1 1-1H7M3.500 1v14M0 15.500h2.500l1-1 1 1H7" />
    </Svg>
  </article>
);

const FloatingTools = () => (
  <div className="absolute left-[734px] top-[45px] flex flex-col gap-[9px]">
    <button aria-label="收起" className="flex size-6 items-center justify-center rounded-sm bg-[#f6f6f7] text-[#555b66] shadow-[0_0_4px_rgba(0,0,0,0.14)]">
      <Svg w={12} h={12}><path d="M1 6.500L6 1l5 5.500zM0 10.500h12" /></Svg>
    </button>
    <button className="flex h-8 w-[100px] items-center overflow-hidden rounded-sm bg-white text-black shadow-[0_1px_5px_rgba(0,0,0,0.18)]">
      <span className="mr-[6px] flex h-8 w-[31px] items-center justify-center bg-[#8b8bff] text-white">
        <Svg w={15} h={17}>
          <path d="M8 15.500H.5V.5h15V8M3 4.500h9M3 7.500h9M3 10.500h4M3 12.500h4" />
          <circle cx="11.500" cy="11.500" r="3" />
          <path d="M13.500 13.500l3 3" />
        </Svg>
      </span>
      论文查重
    </button>
  </div>
);

const Canvas = () => (
  <main className="flex min-w-0 flex-1 justify-center overflow-hidden pl-2">
    <div className="relative flex flex-col">
      <HorizontalRuler />
      <Page />
      <FloatingTools />
    </div>
  </main>
);

/* ---------- right side ---------- */

const ScrollBar = () => (
  <div className="flex w-[15px] shrink-0 flex-col">
    <div className="flex h-[18px] items-center justify-center pt-[2px]">
      <Svg w={10} h={12} className="text-[#aab3cb]">
        <rect x=".5" y=".5" width="9" height="11" rx="1.500" fill="#aab3cb" />
        <path d="M3 2.500h4l-2 3zM2 9.500h1.500M4.500 9.500h1.500M7 9.500h1.500M2 7.500h6" stroke="#fff" />
      </Svg>
    </div>
    <div className="flex flex-1 flex-col items-center bg-[#e8eaf0] pt-2">
      <Caret className="rotate-180" />
      <span className="mt-[141px] h-[45px] w-3 rounded-full bg-[#d3d7de]" />
      <div className="mt-auto flex flex-col items-center gap-[13px] pb-[5px] text-[#8290ad]">
        <Caret />
        <Svg w={6} h={7}><path d="M0 3l3-3 3 3zM0 7l3-3 3 3z" fill="currentColor" stroke="none" /></Svg>
        <Svg w={6} h={6}><rect x=".5" y=".5" width="5" height="5" rx="1" /></Svg>
        <Svg w={6} h={7}><path d="M0 0l3 3 3-3zM0 4l3 3 3-3z" fill="currentColor" stroke="none" /></Svg>
      </div>
    </div>
  </div>
);

const railTools: { label: string; icon: ReactNode }[] = [
  {
    label: "助手",
    icon: (
      <>
        <path d="M4 8c2-5 6-7 11-7 0 5-2 9-7 11zM5 6H2L.5 8.500H4M10 11v3L7.500 15.500V12M1 12l2-1.500M1.500 15L4 12.500M4 16l1.500-2" />
        <circle cx="10" cy="6" r="1.500" />
      </>
    ),
  },
  { label: "画笔", icon: <path d="M6 9l7-8 2 1.500L9 11M6 9l3 2c0 2-2 4-5 3.500H.5C3 13.500 2.500 10 6 9zM4 14.500h12" /> },
  { label: "选择", icon: <path d="M3.500 1v13l3.500-3 2.500 5 2-1-2.500-4.500h5z" /> },
  {
    label: "设置",
    icon: (
      <>
        <path d="M5 3.500h11M0 12.500h9M14 12.500h2" />
        <circle cx="2.500" cy="3.500" r="2" /><circle cx="11.500" cy="12.500" r="2" />
      </>
    ),
  },
  {
    label: "素材",
    icon: (
      <>
        <path d="M2 8v6.500h5M3 1.500h10l2.500 3.500v3M3 1.500L.5 5v2c1.500 1.500 3 1 4-1 .5 2 3 2 4 0" />
        <path d="M11.500 7c2 3 2 6 0 8-2-2-2-5 0-8zM7.500 10c.5 3 2 5 4 5s3.500-2 4-5c-1.500 0-2.500.5-3 1.500" />
      </>
    ),
  },
  {
    label: "灵感",
    icon: (
      <>
        <path d="M6 13.500A6.500 6.500 0 1 1 11 13.500v2H6z" />
        <path d="M9 3.500L6 8h2v3.500L11 7H9z" />
      </>
    ),
  },
  {
    label: "查词",
    icon: (
      <>
        <path d="M7.500 14L.5 12.500V1.500l7 1 8-1V8M7.500 2.500V14M7.500 14l2-.5" />
        <circle cx="12.500" cy="11" r="2.500" />
        <path d="M14.500 12.500l1.500 2" />
      </>
    ),
  },
];

const RightRail = () => (
  <aside className="flex w-[37px] shrink-0 flex-col items-center border-l border-[#dfe2ea] pl-[6px] text-[#2f3c56]">
    <span className="mt-[11px] h-1 w-5 border-y border-[#c8cbd1]" />
    <div className="mt-[13px] flex flex-col gap-1">
      {railTools.map(({ label, icon }) => (
        <button key={label} aria-label={label} className="flex h-8 w-[30px] items-center justify-center">
          <Svg w={17} h={17}>{icon}</Svg>
        </button>
      ))}
    </div>
    <div className="mt-auto flex h-11 w-full items-center justify-center border-t border-[#dfe2ea] pt-[5px]">
      <button aria-label="更多工具">
        <Svg w={17} h={5}>
          <circle cx="2.500" cy="2.500" r="1.500" /><circle cx="8.500" cy="2.500" r="1.500" /><circle cx="14.500" cy="2.500" r="1.500" />
        </Svg>
      </button>
    </div>
  </aside>
);

/* ---------- status bar ---------- */

const StatusBar = () => (
  <footer className="h-[23px] shrink-0 overflow-hidden border-t border-[#dfe2e8] bg-[#f5f7fa] text-[#1f2a3f]">
    <div className="flex h-[29px] items-center pl-[9px] pr-2">
      <span className="w-[62px]">页面: 3/12</span>
      <Divider className="h-4" />
      <span className="w-[73px] pl-[9px]">字数: 2861</span>
      <Divider className="h-4" />
      <button className="ml-[9px] flex items-center gap-1">
        <Svg w={15} h={14}><path d="M7.500 1.500L6 .5H.5v12H6l1.500 1 1.500-1h5.500V.5H9zM5 4.500l5 5M10 4.500l-5 5" /></Svg>
        修订
      </button>
      <button className="ml-[10px] flex h-6 items-center gap-[3px] bg-[#e7f0fb] px-1">
        <Svg w={15} h={14}><path d="M7.500 1.500L6 .5H.5v12H6l1.500 1 1.500-1h5.500V.5H9zM4.500 7L7 9.500l4-4.500" /></Svg>
        拼写检查
      </button>
      <Caret className="mx-px" />
      <Divider className="ml-1 h-4" />
      <button className="ml-1 flex items-center gap-[3px]">
        <Svg w={15} h={14}>
          <path d="M4 12.500H.5V.5H6l1.500 1L9 .5h5.500V4" />
          <circle cx="9" cy="8" r="3.500" fill="#dfe3ea" />
          <path d="M11.500 10.500l3 3" />
        </Svg>
        内容检查
      </button>
      <Caret className="ml-1" />
      <Divider className="ml-[6px] h-4" />
      <button className="ml-[19px] flex items-center gap-1">
        <Svg w={15} h={15}>
          <path d="M.5 3V.5h10V3M5.500.5v12M3.500 12.500h4M10 6.500c0-2 4-2 4 0 0 1.500-2 1.500-2 3.500M12 11.500v1.500" />
        </Svg>
        缺失字体
      </button>

      <div className="ml-auto flex items-center">
        <button aria-label="护眼模式">
          <Svg w={17} h={16}>
            <path d="M.5 10c4-6 12-6 16 0-4 6-12 6-16 0zM8.500 0v3M3 1.500L4.500 4M14 1.500L12.500 4M.5 4.500L2 6M16.500 4.500L15 6" />
            <circle cx="8.500" cy="10" r="2.500" />
          </Svg>
        </button>
        <Divider className="ml-[13px] h-4" />
        <button aria-label="页面视图" className="ml-[11px] flex h-6 w-[23px] items-center justify-center bg-[#d9dee5]">
          <Svg w={14} h={15}><path d="M.5.500h10l3 3v11H.5zM3 6.500h8M3 9.500h8" /></Svg>
        </button>
        <button aria-label="大纲" className="ml-[7px]">
          <Svg w={15} h={14}><path d="M0 1.500h2M4 1.500h11M3 5.500h2M7 5.500h8M3 9.500h2M7 9.500h8M0 13.500h2M4 13.500h11" /></Svg>
        </button>
        <button aria-label="阅读版式" className="ml-[10px]">
          <Svg w={16} h={14}><path d="M8 1.500L7 .5H.5v12H7l1 1 1-1h6.500V.5H9zM8 1.500v12" /></Svg>
        </button>
        <button aria-label="Web版式" className="ml-[10px]">
          <Svg w={15} h={15}>
            <circle cx="7.500" cy="7.500" r="7" />
            <ellipse cx="7.500" cy="7.500" rx="3.500" ry="7" />
            <path d="M.5 7.500h14M7.500 0v15M1.500 4h12M1.500 11h12" />
          </Svg>
        </button>
        <button aria-label="写作模式" className="ml-[11px]">
          <Svg w={17} h={16}><path d="M1 15l2-6 9-8 3 2.500L7 13zM3 9l4 4M7 15.500h9" /></Svg>
        </button>
        <Divider className="ml-[13px] h-4" />
        <button aria-label="适应窗口" className="ml-[15px]">
          <Svg w={14} h={14}><path d="M.5 4V.5H4M10 .5h3.500V4M13.500 10v3.500H10M4 13.500H.5V10M3.500 3.500h7v7h-7z" /></Svg>
        </button>
        <button className="ml-2 flex items-center gap-[5px] text-[#3a4a6b]">
          90%
          <Caret />
        </button>
        <button aria-label="缩小" className="ml-[13px]"><Svg w={10} h={4}><path d="M0 2h10" strokeWidth="2" /></Svg></button>
        <input
          type="range"
          aria-label="缩放"
          min={0}
          max={100}
          defaultValue={44}
          className="ml-3 h-px w-[138px] appearance-none bg-linear-to-r from-[#3a4a6b] from-44% to-[#c8ccd6] to-44% [&::-webkit-slider-thumb]:size-3 [&::-webkit-slider-thumb]:appearance-none [&::-webkit-slider-thumb]:rounded-full [&::-webkit-slider-thumb]:border [&::-webkit-slider-thumb]:border-[#555] [&::-webkit-slider-thumb]:bg-[#f1f1f1]"
        />
        <button aria-label="放大" className="ml-3"><Svg w={10} h={10}><path d="M5 0v10M0 5h10" strokeWidth="2" /></Svg></button>
        <button aria-label="全屏" className="ml-[14px]">
          <Svg w={14} h={14}><path d="M.5 4V.5H4M.5.5l4 4M10 .5h3.500V4M13.500.5l-4 4M13.500 10v3.500H10M13.500 13.500l-4-4M4 13.500H.5V10M.5 13.500l4-4" /></Svg>
        </button>
      </div>
    </div>
  </footer>
);

const Watermark = () => (
  <div className="pointer-events-none absolute bottom-[7px] right-[11px] z-20 flex items-center opacity-80">
    <svg width="44" height="42" viewBox="0 0 44 42" aria-hidden="true">
      <defs>
        <linearGradient id="sky" x1="0" y1="1" x2="1" y2="0">
          <stop offset="0" stopColor="#2f6fd0" />
          <stop offset="1" stopColor="#49c3f5" />
        </linearGradient>
        <linearGradient id="leaf" x1="0" y1="1" x2="1" y2="0">
          <stop offset="0" stopColor="#e8ee4e" />
          <stop offset="1" stopColor="#37b36b" />
        </linearGradient>
      </defs>
      <path d="M44 1C22-1 2 10 0 22c-1 7 3 10 8 10C2 24 14 6 44 1z" fill="url(#sky)" />
      <path d="M24 16c-10 0-16 7-13 12 3 4 10 3 12-2-4 2-8 0-7-3s4-5 9-4z" fill="url(#sky)" />
      <path d="M34 13c9 4 9 14 1 20-8 7-20 8-32 7 16-1 26-6 26-14 0-3-1-5-3-6 5 0 8-3 8-7z" fill="url(#leaf)" />
    </svg>
    <div className="flex flex-col font-bold">
      <span className="text-[21px] leading-6 text-[#3d86d8]">极光下载站</span>
      <span className="font-['Liberation_Sans',sans-serif] text-base leading-5 text-[#3fbf74]">www.xz7.com</span>
    </div>
  </div>
);

export default function App() {
  return (
    <div className="relative flex h-screen flex-col overflow-hidden bg-[#f5f7fa] font-['Noto_Sans','Noto_Sans_CJK_SC',sans-serif] text-xs">
      <TabStrip />
      <MenuRow />
      <Ribbon />
      <div className="flex min-h-0 flex-1">
        <LeftRail />
        <SectionPanel />
        <VerticalRuler />
        <Canvas />
        <ScrollBar />
        <RightRail />
      </div>
      <StatusBar />
      <Watermark />
    </div>
  );
}
